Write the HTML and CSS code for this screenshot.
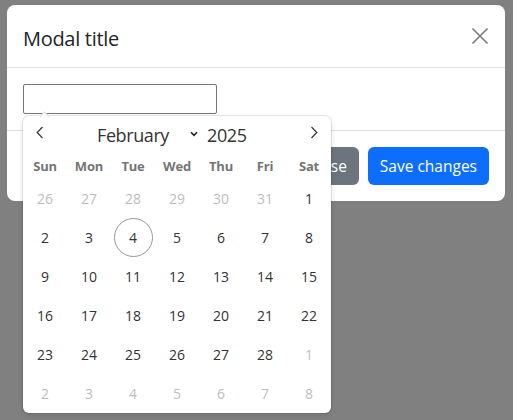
FILE: index.html
```html
<!DOCTYPE html>
<html>
<head>
<meta charset="utf-8">
<link rel="stylesheet" href="styles.css">
</head>
<body>
<div class="modal">
  <div class="modal-header">
    <h5 class="modal-title">Modal title</h5>
    <button class="btn-close" aria-label="Close">
      <svg width="18" height="18" viewBox="0 0 18 18"><path d="M1.5 1.5L16.5 16.5M16.5 1.5L1.5 16.5" stroke="#7a7a7a" stroke-width="1.6" fill="none"/></svg>
    </button>
  </div>
  <div class="modal-body">
    <input class="date-input" type="text">
  </div>
  <div class="modal-footer">
    <button class="btn btn-secondary">Close</button>
    <button class="btn btn-primary">Save changes</button>
  </div>
</div>

<div class="picker">
  <div class="notch"></div>
  <div class="picker-head">
    <span class="nav nav-prev"><svg width="8" height="13" viewBox="0 0 8 13"><path d="M6.5 1L1.2 6.5L6.5 12" stroke="#333" stroke-width="1.2" fill="none"/></svg></span>
    <span class="month">February</span>
    <svg class="caret" width="8" height="6" viewBox="0 0 8 6"><path d="M1 1.2L4 4.4L7 1.2" stroke="#222" stroke-width="1.6" fill="none"/></svg>
    <span class="year">2025</span>
    <span class="nav nav-next"><svg width="8" height="13" viewBox="0 0 8 13"><path d="M1.5 1L6.8 6.5L1.5 12" stroke="#333" stroke-width="1.2" fill="none"/></svg></span>
  </div>
  <div class="weekdays">
    <span>Sun</span><span>Mon</span><span>Tue</span><span>Wed</span><span>Thu</span><span>Fri</span><span>Sat</span>
  </div>
  <div class="days">
    <span class="muted">26</span><span class="muted">27</span><span class="muted">28</span><span class="muted">29</span><span class="muted">30</span><span class="muted">31</span><span>1</span>
    <span>2</span><span>3</span><span class="today">4</span><span>5</span><span>6</span><span>7</span><span>8</span>
    <span>9</span><span>10</span><span>11</span><span>12</span><span>13</span><span>14</span><span>15</span>
    <span>16</span><span>17</span><span>18</span><span>19</span><span>20</span><span>21</span><span>22</span>
    <span>23</span><span>24</span><span>25</span><span>26</span><span>27</span><span>28</span><span class="muted">1</span>
    <span class="muted">2</span><span class="muted">3</span><span class="muted">4</span><span class="muted">5</span><span class="muted">6</span><span class="muted">7</span><span class="muted">8</span>
  </div>
</div>
</body>
</html>
```
FILE: styles.css
```css
html, body {
  margin: 0;
  padding: 0;
}
body {
  background: #808080;
  font-family: "Open Sans", "Noto Sans", sans-serif;
  color: #212529;
  height: 420px;
  overflow: hidden;
}
.modal {
  width: 498px;
  margin: 5px 0 0 7px;
  background: #fff;
  border-radius: 8px;
}
.modal-header {
  display: flex;
  align-items: center;
  height: 62px;
  padding: 0 16px;
  border-bottom: 1px solid #dee2e6;
}
.modal-title {
  margin: 5px 0 0;
  font-size: 20px;
  font-weight: 400;
  line-height: 30px;
  letter-spacing: -0.3px;
  flex: 1;
}
.btn-close {
  border: 0;
  background: none;
  padding: 0;
  width: 18px;
  height: 18px;
  margin-top: -1px;
  display: block;
}
.btn-close svg {
  display: block;
}
.modal-body {
  padding: 16px;
  height: 30px;
  border-bottom: 1px solid #dee2e6;
}
.date-input {
  box-sizing: border-box;
  width: 194px;
  height: 30px;
  border: 1px solid #767676;
  border-radius: 2px;
  margin: 0;
  display: block;
}
.modal-footer {
  display: flex;
  justify-content: flex-end;
  gap: 9px;
  padding: 16px 16px 16px;
}
.btn {
  font-family: inherit;
  font-size: 15.5px;
  line-height: 24px;
  padding: 7px 12px;
  border: 0;
  border-radius: 6px;
  color: #fff;
}
.btn-secondary {
  background: #6c757d;
}
.btn-primary {
  background: #0d6efd;
}
.picker {
  position: absolute;
  left: 23px;
  top: 116px;
  width: 308px;
  background: #fff;
  border-radius: 6px;
  box-shadow: 0 0 0 1px rgba(0, 0, 0, 0.08), 0 2px 6px rgba(0, 0, 0, 0.12);
}
.notch {
  position: absolute;
  left: 18px;
  top: -3px;
  width: 6px;
  height: 6px;
  background: #fff;
  transform: rotate(45deg);
  border-top: 1px solid #ddd;
  border-left: 1px solid #ddd;
}
.picker-head {
  display: flex;
  align-items: center;
  height: 37px;
  color: #333;
}
.nav {
  display: flex;
  align-items: center;
}
.nav svg {
  display: block;
}
.nav-prev {
  margin-left: 13px;
  margin-top: -4px;
}
.month {
  margin-left: 53px;
  width: 93px;
  font-size: 18px;
  letter-spacing: -0.4px;
}
.caret {
  display: block;
  margin-top: -1px;
}
.year {
  margin-left: 9px;
  font-size: 18px;
  letter-spacing: -0.4px;
}
.nav-next {
  margin-left: auto;
  margin-right: 13px;
  margin-top: -4px;
}
.weekdays, .days {
  display: grid;
  grid-template-columns: repeat(7, 44px);
  text-align: center;
}
.weekdays {
  height: 26px;
  align-items: center;
  font-size: 13px;
  font-weight: 700;
  color: #757575;
  letter-spacing: -0.2px;
}
.days {
  grid-auto-rows: 39px;
  font-size: 14px;
  color: #333;
}
.days span {
  display: flex;
  align-items: center;
  justify-content: center;
}
.days .muted {
  color: #bdbdbd;
}
.days .today {
  box-sizing: border-box;
  width: 39px;
  height: 39px;
  margin: 0 auto;
  border: 1px solid #999;
  border-radius: 50%;
}
```
